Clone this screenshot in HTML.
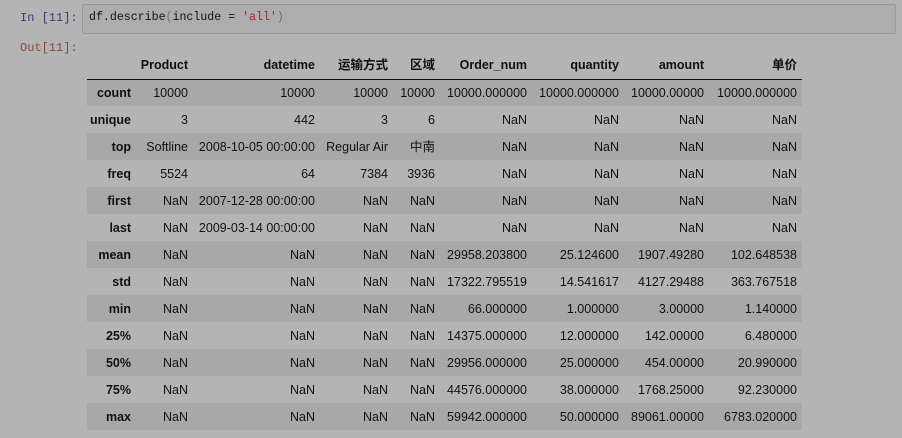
<!DOCTYPE html>
<html><head><meta charset="utf-8"><style>
body{margin:0;width:902px;height:438px;background:#b4b4b4;font-family:"Liberation Sans","Noto Sans CJK SC",sans-serif;overflow:hidden;position:relative}
.p{position:absolute;font-family:"Liberation Mono",monospace;font-size:12px}
.in{left:20px;top:11px;color:#3a3a7a}
.out{left:20px;top:41px;color:#8a4a3a}
.box{position:absolute;left:82px;top:4px;width:812px;height:28px;background:#adadad;border:1px solid #989898;border-radius:2px}
.code{left:89px;top:11px;color:#111;font-size:11.6px}
table{position:absolute;left:87px;top:52px;border-collapse:collapse;font-size:12.5px;color:#111;table-layout:fixed}
td,th{height:27px;padding:0 5px 0 0;text-align:right;white-space:nowrap;box-sizing:border-box;line-height:14px;vertical-align:middle}
thead th{height:27px;border-bottom:1px solid #111}
tbody tr:nth-child(odd){background:#a8a8a8}
</style></head><body>
<div class="p in">In [11]:</div>
<div class="box"></div>
<div class="p code">df.describe<span style="color:#4a8a4a">(</span>include = <span style="color:#9a2a2a">'all'</span><span style="color:#4a8a4a">)</span></div>
<div class="p out">Out[11]:</div>
<table>
<colgroup><col style="width:49px"><col style="width:57px"><col style="width:127px"><col style="width:73px"><col style="width:47px"><col style="width:92px"><col style="width:92px"><col style="width:85px"><col style="width:93px"></colgroup>
<thead><tr><th></th><th>Product</th><th>datetime</th><th>运输方式</th><th>区域</th><th>Order_num</th><th>quantity</th><th>amount</th><th>单价</th></tr></thead>
<tbody>
<tr><th>count</th><td>10000</td><td>10000</td><td>10000</td><td>10000</td><td>10000.000000</td><td>10000.000000</td><td>10000.00000</td><td>10000.000000</td></tr>
<tr><th>unique</th><td>3</td><td>442</td><td>3</td><td>6</td><td>NaN</td><td>NaN</td><td>NaN</td><td>NaN</td></tr>
<tr><th>top</th><td>Softline</td><td>2008-10-05 00:00:00</td><td>Regular Air</td><td>中南</td><td>NaN</td><td>NaN</td><td>NaN</td><td>NaN</td></tr>
<tr><th>freq</th><td>5524</td><td>64</td><td>7384</td><td>3936</td><td>NaN</td><td>NaN</td><td>NaN</td><td>NaN</td></tr>
<tr><th>first</th><td>NaN</td><td>2007-12-28 00:00:00</td><td>NaN</td><td>NaN</td><td>NaN</td><td>NaN</td><td>NaN</td><td>NaN</td></tr>
<tr><th>last</th><td>NaN</td><td>2009-03-14 00:00:00</td><td>NaN</td><td>NaN</td><td>NaN</td><td>NaN</td><td>NaN</td><td>NaN</td></tr>
<tr><th>mean</th><td>NaN</td><td>NaN</td><td>NaN</td><td>NaN</td><td>29958.203800</td><td>25.124600</td><td>1907.49280</td><td>102.648538</td></tr>
<tr><th>std</th><td>NaN</td><td>NaN</td><td>NaN</td><td>NaN</td><td>17322.795519</td><td>14.541617</td><td>4127.29488</td><td>363.767518</td></tr>
<tr><th>min</th><td>NaN</td><td>NaN</td><td>NaN</td><td>NaN</td><td>66.000000</td><td>1.000000</td><td>3.00000</td><td>1.140000</td></tr>
<tr><th>25%</th><td>NaN</td><td>NaN</td><td>NaN</td><td>NaN</td><td>14375.000000</td><td>12.000000</td><td>142.00000</td><td>6.480000</td></tr>
<tr><th>50%</th><td>NaN</td><td>NaN</td><td>NaN</td><td>NaN</td><td>29956.000000</td><td>25.000000</td><td>454.00000</td><td>20.990000</td></tr>
<tr><th>75%</th><td>NaN</td><td>NaN</td><td>NaN</td><td>NaN</td><td>44576.000000</td><td>38.000000</td><td>1768.25000</td><td>92.230000</td></tr>
<tr><th>max</th><td>NaN</td><td>NaN</td><td>NaN</td><td>NaN</td><td>59942.000000</td><td>50.000000</td><td>89061.00000</td><td>6783.020000</td></tr>
</tbody></table>
</body></html>
